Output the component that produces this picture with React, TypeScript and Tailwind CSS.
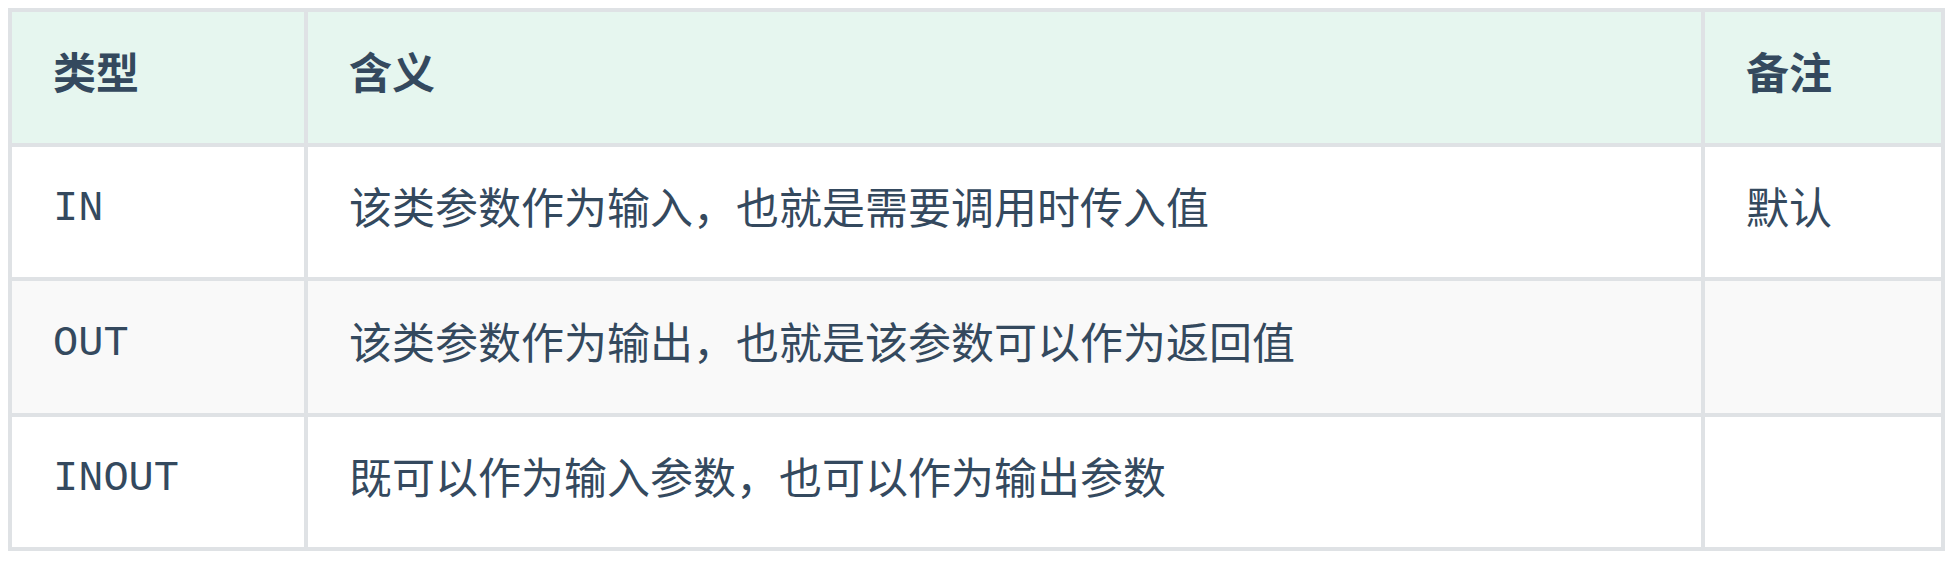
const rows = [
  { type: 'IN', meaning: '该类参数作为输入，也就是需要调用时传入值', note: '默认' },
  { type: 'OUT', meaning: '该类参数作为输出，也就是该参数可以作为返回值', note: '' },
  { type: 'INOUT', meaning: '既可以作为输入参数，也可以作为输出参数', note: '' },
];

const App = () => {
  return (
    <div className="bg-white min-h-screen pt-[8px] pl-[8px] font-['Noto_Sans_CJK_SC',sans-serif] text-[#34495e] text-[43px] leading-[60px]">
      <div className="grid w-fit grid-cols-[292px_1393px_236px] grid-rows-[131px_130px_132px_130px] gap-[4px] p-[4px] bg-[#dfe2e5]">
        {/* Header */}
        <div className="flex items-center pl-[41px] pb-[15px] bg-[#e6f6ef] font-bold">类型</div>
        <div className="flex items-center pl-[41px] pb-[15px] bg-[#e6f6ef] font-bold">含义</div>
        <div className="flex items-center pl-[41px] pb-[15px] bg-[#e6f6ef] font-bold">备注</div>

        {/* Body */}
        {rows.map((row, i) => {
          const bg = i % 2 === 1 ? 'bg-[#f9f9f9]' : 'bg-white';
          return [
            <div key={`${row.type}-t`} className={`flex items-center pl-[41px] pb-[15px] ${bg}`}>
              <span>
                <code className="font-['Liberation_Mono',monospace] text-[42px] font-normal">{row.type}</code>
              </span>
            </div>,
            <div key={`${row.type}-m`} className={`flex items-center pl-[41px] pb-[15px] ${bg}`}>
              {row.meaning}
            </div>,
            <div key={`${row.type}-n`} className={`flex items-center pl-[41px] pb-[15px] ${bg}`}>
              {row.note}
            </div>,
          ];
        })}
      </div>
    </div>
  );
};

export default App;
